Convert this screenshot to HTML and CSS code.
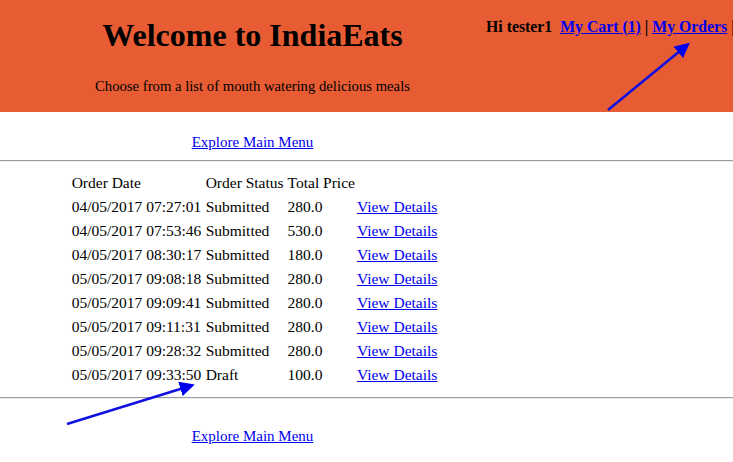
FILE: index.html
```html
<!DOCTYPE html>
<html>
<head>
<meta charset="utf-8">
<link rel="stylesheet" href="styles.css">
</head>
<body>
<div class="header">
  <div class="brand">
    <h1 class="title">Welcome to IndiaEats</h1>
    <p class="tagline">Choose from a list of mouth watering delicious meals</p>
  </div>
  <div class="user">Hi tester1&nbsp;&nbsp;<a href="#">My Cart (1)</a> | <a href="#">My Orders</a> |</div>
</div>
<div class="nav"><a href="#">Explore Main Menu</a></div>
<hr class="rule">
<div class="orders">
  <table class="order-table">
    <tr><td>Order Date</td><td>Order Status</td><td>Total Price</td><td></td></tr>
    <tr><td>04/05/2017 07:27:01</td><td>Submitted</td><td class="price">280.0</td><td><a href="#">View Details</a></td></tr>
    <tr><td>04/05/2017 07:53:46</td><td>Submitted</td><td class="price">530.0</td><td><a href="#">View Details</a></td></tr>
    <tr><td>04/05/2017 08:30:17</td><td>Submitted</td><td class="price">180.0</td><td><a href="#">View Details</a></td></tr>
    <tr><td>05/05/2017 09:08:18</td><td>Submitted</td><td class="price">280.0</td><td><a href="#">View Details</a></td></tr>
    <tr><td>05/05/2017 09:09:41</td><td>Submitted</td><td class="price">280.0</td><td><a href="#">View Details</a></td></tr>
    <tr><td>05/05/2017 09:11:31</td><td>Submitted</td><td class="price">280.0</td><td><a href="#">View Details</a></td></tr>
    <tr><td>05/05/2017 09:28:32</td><td>Submitted</td><td class="price">280.0</td><td><a href="#">View Details</a></td></tr>
    <tr><td>05/05/2017 09:33:50</td><td>Draft</td><td class="price">100.0</td><td><a href="#">View Details</a></td></tr>
  </table>
</div>
<hr class="rule">
<div class="nav nav-bottom"><a href="#">Explore Main Menu</a></div>
<svg class="arrows" width="733" height="462" viewBox="0 0 733 462">
  <defs>
    <marker id="head" markerWidth="6" markerHeight="6" refX="4" refY="3" orient="auto" markerUnits="strokeWidth">
      <path d="M0,0 L6,3 L0,6 Z" fill="#0000ee"/>
    </marker>
  </defs>
  <line x1="608" y1="110" x2="686" y2="46" stroke="#1010e0" stroke-width="2.5" marker-end="url(#head)"/>
  <line x1="67" y1="424" x2="190" y2="386" stroke="#1010e0" stroke-width="2.5" marker-end="url(#head)"/>
</svg>
</body>
</html>
```
FILE: styles.css
```css
html, body {
  margin: 0;
  padding: 0;
  background: #ffffff;
  overflow: hidden;
  width: 733px;
  height: 462px;
}
body {
  font-family: "Liberation Serif", "Times New Roman", serif;
  font-size: 16px;
  color: #000;
  position: relative;
}
a { color: #0000ee; }
.header {
  background: #e85c33;
  height: 112px;
  display: flex;
  white-space: nowrap;
}
.brand {
  width: 505px;
  flex: none;
  text-align: center;
}
.title {
  margin: 0;
  padding-top: 17px;
  font-size: 32px;
  line-height: 37px;
  font-weight: bold;
}
.tagline {
  margin: 0;
  padding-top: 23px;
  font-size: 14.7px;
  line-height: 18px;
}
.user {
  padding-top: 18px;
  margin-left: -19px;
  font-weight: bold;
  font-size: 15.8px;
  line-height: 18px;
}
.nav {
  width: 505px;
  text-align: center;
  padding-top: 21px;
  line-height: 18px;
  font-size: 15px;
}
.rule {
  margin: 9px 0 0 0;
  border: 0;
  border-top: 1px solid #9a9a9a;
  border-bottom: 1px solid #eeeeee;
  height: 0;
}
.orders {
  width: 505px;
  display: flex;
  justify-content: center;
  padding-top: 9px;
}
.order-table {
  border-collapse: separate;
  border-spacing: 0;
  font-size: 15.5px;
  margin-left: 4px;
}
.order-table td {
  padding: 2px 2px;
  height: 20px;
  line-height: 20px;
  white-space: nowrap;
}
.order-table td:nth-child(3) { padding-right: 0; }
.order-table td.price { width: 63px; }
.order-table tr td:first-child { width: 130px; }
.rule + .nav-bottom { padding-top: 28px; }
.orders + .rule { margin-top: 10px; }
.arrows {
  position: absolute;
  left: 0;
  top: 0;
  pointer-events: none;
}
```
